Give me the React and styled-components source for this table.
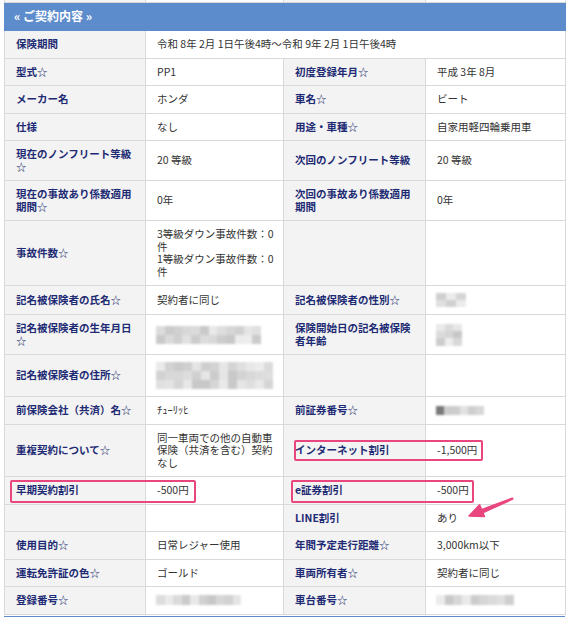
import React from 'react'
import styled, { createGlobalStyle } from 'styled-components'

const GlobalStyle = createGlobalStyle`
  body {
    margin: 0;
    background: #fff;
    font-family: "Noto Sans CJK JP", "Noto Sans", sans-serif;
  }
`

const PINK = '#e9457f'

function Blur({ w, h, cols, rows, seed = 1, dark }) {
  const cells = []
  let s = seed * 9301 + 49297
  for (let i = 0; i < cols * rows; i++) {
    s = (s * 9301 + 49297) % 233280
    const g = Math.round(198 + (s / 233280) * 40)
    const c = dark && i === 0 ? 'rgb(120,120,120)' : `rgb(${g},${g},${g})`
    cells.push(<Pix key={i} style={{ background: c }} />)
  }
  return (
    <BlurBox $w={w} $h={h} $cols={cols} $rows={rows}>
      {cells}
    </BlurBox>
  )
}

function Star() {
  return <StarMark>☆</StarMark>
}

function Arrow() {
  return (
    <ArrowSvg width="60" height="35" viewBox="0 0 60 35">
      <path d="M19.5 19.2 L51 7.6 Q53 7.4 52.4 9.6 L22 23.4 Z" fill={PINK} />
      <path d="M8 26 L18.6 14.8 L23.4 26.6 Z" fill={PINK} strokeLinejoin="round" stroke={PINK} strokeWidth="1.5" />
    </ArrowSvg>
  )
}

export default function App() {
  return (
    <Page>
      <GlobalStyle />
      <Table>
        <colgroup>
          <col style={{ width: 141 }} />
          <col style={{ width: 138 }} />
          <col style={{ width: 142 }} />
          <col style={{ width: 140 }} />
        </colgroup>
        <tbody>
          <tr>
            <CutLabel />
            <CutValue />
            <CutLabel />
            <CutValue />
          </tr>
          <tr>
            <Head colSpan={4}>« ご契約内容 »</Head>
          </tr>
          <tr>
            <Label>保険期間</Label>
            <Value colSpan={3}>令和 8年 2月 1日午後4時～令和 9年 2月 1日午後4時</Value>
          </tr>
          <tr>
            <Label>型式<Star /></Label>
            <Value>PP1</Value>
            <Label>初度登録年月<Star /></Label>
            <Value>平成 3年 8月</Value>
          </tr>
          <tr>
            <Label>メーカー名</Label>
            <Value>ホンダ</Value>
            <Label>車名<Star /></Label>
            <Value>ビート</Value>
          </tr>
          <tr>
            <Label>仕様</Label>
            <Value>なし</Value>
            <Label>用途・車種<Star /></Label>
            <Value>自家用軽四輪乗用車</Value>
          </tr>
          <tr>
            <Label>現在のノンフリート等級<br /><Star /></Label>
            <Value>20 等級</Value>
            <Label>次回のノンフリート等級</Label>
            <Value>20 等級</Value>
          </tr>
          <tr>
            <Label>現在の事故あり係数適用<br />期間<Star /></Label>
            <Value>0年</Value>
            <Label>次回の事故あり係数適用<br />期間</Label>
            <Value>0年</Value>
          </tr>
          <tr>
            <Label>事故件数<Star /></Label>
            <Value>
              3等級ダウン事故件数：0<br />件<br />1等級ダウン事故件数：0<br />件
            </Value>
            <Label />
            <Value />
          </tr>
          <tr>
            <Label>記名被保険者の氏名<Star /></Label>
            <Value>契約者に同じ</Value>
            <Label>記名被保険者の性別<Star /></Label>
            <Value><Blur w={30} h={14} cols={3} rows={2} seed={3} /></Value>
          </tr>
          <tr>
            <Label>記名被保険者の生年月日<br /><Star /></Label>
            <Value><Blur w={105} h={18} cols={12} rows={2} seed={7} /></Value>
            <Label>保険開始日の記名被保険<br />者年齢</Label>
            <Value><Blur w={26} h={22} cols={3} rows={3} seed={5} /></Value>
          </tr>
          <tr>
            <Label>記名被保険者の住所<Star /></Label>
            <Value><Blur w={117} h={27} cols={13} rows={3} seed={11} /></Value>
            <Label />
            <Value />
          </tr>
          <tr>
            <Label>前保険会社（共済）名<Star /></Label>
            <Value>ﾁｭｰﾘｯﾋ</Value>
            <Label>前証券番号<Star /></Label>
            <Value><Blur w={48} h={9} cols={6} rows={1} seed={2} dark /></Value>
          </tr>
          <tr>
            <Label>重複契約について<Star /></Label>
            <Value>同一車両での他の自動車<br />保険（共済を含む）契約<br />なし</Value>
            <Label>
              インターネット割引
              <Mark $left={10} $width={189} $top="calc(50% - 10px)" $height={21} />
            </Label>
            <Value>-1,500円</Value>
          </tr>
          <tr>
            <Label>
              早期契約割引
              <Mark $left={5} $width={186} $top="3px" $height={23} />
            </Label>
            <Value>-500円</Value>
            <Label>
              e証券割引
              <Mark $left={7} $width={183} $top="3px" $height={23} />
            </Label>
            <Value>-500円</Value>
          </tr>
          <tr>
            <Label />
            <Value />
            <Label>LINE割引</Label>
            <Value>あり<Arrow /></Value>
          </tr>
          <tr>
            <Label>使用目的<Star /></Label>
            <Value>日常レジャー使用</Value>
            <Label>年間予定走行距離<Star /></Label>
            <Value>3,000km以下</Value>
          </tr>
          <tr>
            <Label>運転免許証の色<Star /></Label>
            <Value>ゴールド</Value>
            <Label>車両所有者<Star /></Label>
            <Value>契約者に同じ</Value>
          </tr>
          <tr>
            <Label>登録番号<Star /></Label>
            <Value><Blur w={85} h={10} cols={10} rows={1} seed={13} /></Value>
            <Label>車台番号<Star /></Label>
            <Value><Blur w={78} h={10} cols={9} rows={1} seed={17} /></Value>
          </tr>
        </tbody>
      </Table>
      <NextBar />
    </Page>
  )
}

const Page = styled.div`
  position: relative;
  padding-left: 4px;
  width: 563px;
`
const Table = styled.table`
  width: 561px;
  border-collapse: collapse;
  table-layout: fixed;
  font-size: 10.5px;
  line-height: 12.5px;
`
const CutLabel = styled.td`
  height: 2px;
  padding: 0;
  background: #f4f4f4;
  border: 1px solid #d9d9d9;
  border-top: none;
`
const CutValue = styled(CutLabel)`
  background: #fff;
`
const Head = styled.th`
  height: 27px;
  padding: 0 9px;
  background: #5c8ccb;
  border: 1px solid #5c8ccb;
  color: #fff;
  font-size: 12px;
  font-weight: 700;
  text-align: left;
  vertical-align: middle;
`
const Label = styled.th`
  position: relative;
  padding: 7px 5px 7px 11px;
  background: #f3f3f3;
  border: 1px solid #d9d9d9;
  color: #1e2b74;
  font-weight: 700;
  text-align: left;
  vertical-align: middle;
  white-space: nowrap;
`
const Value = styled.td`
  position: relative;
  padding: 7px 6px 7px 11px;
  background: #fff;
  border: 1px solid #d9d9d9;
  color: #333;
  vertical-align: middle;
  white-space: nowrap;
`
const StarMark = styled.span`
  font-weight: 400;
  color: #2c3775;
`
const BlurBox = styled.div`
  display: grid;
  grid-template-columns: repeat(${p => p.$cols}, 1fr);
  grid-template-rows: repeat(${p => p.$rows}, 1fr);
  width: ${p => p.$w}px;
  height: ${p => p.$h}px;
  margin-left: -1px;
  filter: blur(1px);
`
const Pix = styled.span`
  display: block;
`
const Mark = styled.span`
  position: absolute;
  z-index: 2;
  left: ${p => p.$left}px;
  top: ${p => p.$top};
  width: ${p => p.$width}px;
  height: ${p => p.$height}px;
  box-sizing: border-box;
  border: 2.5px solid ${PINK};
  border-radius: 2px;
  pointer-events: none;
`
const ArrowSvg = styled.svg`
  position: absolute;
  z-index: 2;
  left: 35px;
  top: -15px;
  overflow: visible;
`
const NextBar = styled.div`
  height: 4px;
  width: 561px;
  margin-top: 1px;
  background: #5c8ccb;
`
